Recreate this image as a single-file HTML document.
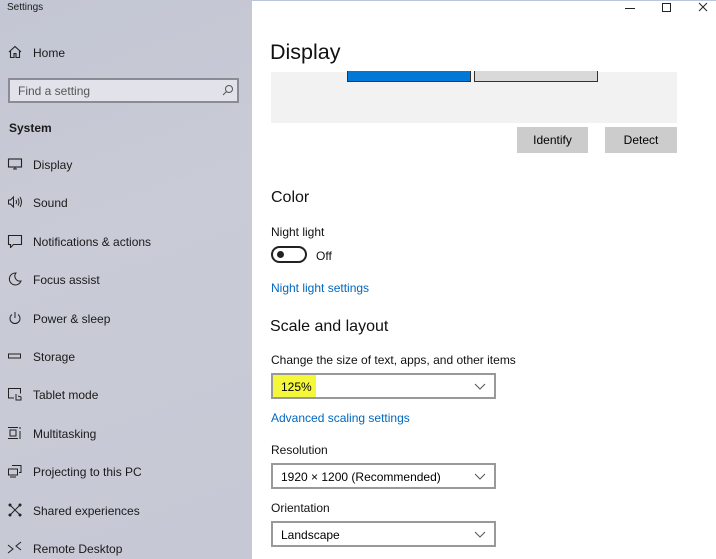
<html><head><style>
body{margin:0;width:716px;height:559px;overflow:hidden;font-family:"Liberation Sans",sans-serif;position:relative;background:#fff}
.side{position:absolute;left:0;top:0;width:252px;height:559px;background:linear-gradient(160deg,#c3c6d3 0%,#c9cbd6 40%,#c6c8d5 100%);color:#1a1a1a}
.a{position:absolute;white-space:nowrap}
.it{position:absolute;left:33px;font-size:12px;margin-top:1px}
.ic{position:absolute;left:7px;width:16px;height:14px}
.r{color:#111}
.dd{position:absolute;left:271px;width:221px;height:22px;border:2px solid #999;box-sizing:content-box;font-size:12px}
.dd span{position:absolute;left:8px;top:5px}
.dd svg{position:absolute;right:8px;top:8px}
.btn{position:absolute;top:127px;height:26px;background:#ccc;font-size:12px;text-align:center;line-height:27px}
.lk{color:#0067c0;font-size:12px}
</style></head><body>
<div class="side">
<div class="a" style="left:7px;top:2px;font-size:10px">Settings</div>
<svg class="ic" style="top:45px" viewBox="0 0 16 14"><path d="M2 7L8 1.5 14 7M3.5 6v6.5h3.5v-4h2v4h3.5V6" fill="none" stroke="#222" stroke-width="1.1"/></svg>
<div class="it" style="top:45px">Home</div>
<div class="a" style="left:8px;top:78px;width:227px;height:21px;border:2px solid #8a8c95;background:#e2e3ea"></div>
<div class="a" style="left:18px;top:84px;font-size:12px;color:#555">Find a setting</div>
<svg class="a" style="left:222px;top:84px" width="12" height="12"><circle cx="7" cy="5" r="3.5" fill="none" stroke="#555"/><path d="M4.5 7.5L1 11" stroke="#555"/></svg>
<div class="a" style="left:9px;top:121px;font-size:12px;font-weight:bold">System</div>
<svg class="ic" style="top:157px" viewBox="0 0 16 14"><rect x="1.5" y="2" width="13" height="8" fill="none" stroke="#222" stroke-width="1.1"/><path d="M6 12h4M8 10v2" stroke="#222"/></svg>
<div class="it" style="top:157px">Display</div>
<svg class="ic" style="top:195px" viewBox="0 0 16 14"><path d="M1.5 5h2l3-3v10l-3-3h-2z" fill="none" stroke="#222"/><path d="M9 5q1 2 0 4M11 3.5q2 3.5 0 7M13 2q3 5 0 10" fill="none" stroke="#222"/></svg>
<div class="it" style="top:195px">Sound</div>
<svg class="ic" style="top:234px" viewBox="0 0 16 14"><path d="M1.5 1.5h13v9h-8l-3 3v-3h-2z" fill="none" stroke="#222" stroke-width="1.1"/></svg>
<div class="it" style="top:234px">Notifications &amp; actions</div>
<svg class="ic" style="top:272px" viewBox="0 0 16 14"><path d="M9 1a6 6 0 1 0 5 8 5 5 0 0 1-5-8z" fill="none" stroke="#222"/></svg>
<div class="it" style="top:272px">Focus assist</div>
<svg class="ic" style="top:311px" viewBox="0 0 16 14"><path d="M5 3.5a5 5 0 1 0 6 0M8 1v6" fill="none" stroke="#222"/></svg>
<div class="it" style="top:311px">Power &amp; sleep</div>
<svg class="ic" style="top:349px" viewBox="0 0 16 14"><rect x="1.5" y="5" width="12" height="4" fill="none" stroke="#222"/></svg>
<div class="it" style="top:349px">Storage</div>
<svg class="ic" style="top:387px" viewBox="0 0 16 14"><path d="M7 11H1.5V1.5h12v5" fill="none" stroke="#222"/><path d="M9 7v6h5v-3l-3-1" fill="none" stroke="#222"/></svg>
<div class="it" style="top:387px">Tablet mode</div>
<svg class="ic" style="top:426px" viewBox="0 0 16 14"><path d="M1 1.5h10M1 12.5h10M3 4h6v6H3z" fill="none" stroke="#222"/><path d="M13 1v2M13 5v8" stroke="#222"/></svg>
<div class="it" style="top:426px">Multitasking</div>
<svg class="ic" style="top:464px" viewBox="0 0 16 14"><path d="M5 1.5h9v7h-2M1.5 5h9v6h-9zM3 13h6" fill="none" stroke="#222"/></svg>
<div class="it" style="top:464px">Projecting to this PC</div>
<svg class="ic" style="top:503px" viewBox="0 0 16 14"><path d="M3 2l10 10M13 2L3 12" stroke="#222"/><circle cx="3" cy="2" r="1.5" fill="#222"/><circle cx="13" cy="2" r="1.5" fill="#222"/><circle cx="3" cy="12" r="1.5" fill="#222"/><circle cx="13" cy="12" r="1.5" fill="#222"/></svg>
<div class="it" style="top:503px">Shared experiences</div>
<svg class="ic" style="top:541px" viewBox="0 0 16 14"><path d="M1 4l5 4-5 4M14 1L9 5l5 4" fill="none" stroke="#222"/></svg>
<div class="it" style="top:541px">Remote Desktop</div>
</div>
<div class="a" style="left:252px;top:0;width:464px;height:1px;background:#b9c6dc"></div>
<svg class="a" style="left:620px;top:0" width="96" height="16"><path d="M5 8.5h10" stroke="#222"/><rect x="42.5" y="3.5" width="8" height="8" fill="none" stroke="#222"/><path d="M79 3l8 8M87 3l-8 8" stroke="#222"/></svg>
<div class="a r" style="left:270px;top:40px;font-size:21.5px">Display</div>
<div class="a" style="left:271px;top:72px;width:406px;height:51px;background:#f2f2f2"></div>
<div class="a" style="left:347px;top:71px;width:122px;height:10px;background:#0078d7;border:1px solid #333;border-top:none"></div>
<div class="a" style="left:474px;top:71px;width:122px;height:10px;background:#d9d9d9;border:1px solid #333;border-top:none"></div>
<div class="btn" style="left:517px;width:71px">Identify</div>
<div class="btn" style="left:605px;width:72px">Detect</div>
<div class="a r" style="left:271px;top:189px;font-size:16px">Color</div>
<div class="a r" style="left:271px;top:225px;font-size:12px">Night light</div>
<div class="a" style="left:271px;top:246px;width:32px;height:13px;border:2px solid #222;border-radius:10px"></div>
<div class="a" style="left:277px;top:251px;width:7px;height:7px;border-radius:50%;background:#222"></div>
<div class="a r" style="left:316px;top:249px;font-size:12px">Off</div>
<div class="a lk" style="left:271px;top:281px">Night light settings</div>
<div class="a r" style="left:270px;top:318px;font-size:16px">Scale and layout</div>
<div class="a r" style="left:271px;top:353px;font-size:12px">Change the size of text, apps, and other items</div>
<div class="dd" style="top:373px"><div class="a" style="left:0;top:0;width:43px;height:22px;background:#f5f83a"></div><span>125%</span><svg width="12" height="7"><path d="M1 1l5 5 5-5" fill="none" stroke="#555"/></svg></div>
<div class="a lk" style="left:271px;top:411px">Advanced scaling settings</div>
<div class="a r" style="left:271px;top:443px;font-size:12px">Resolution</div>
<div class="dd" style="top:463px"><span>1920 × 1200 (Recommended)</span><svg width="12" height="7"><path d="M1 1l5 5 5-5" fill="none" stroke="#555"/></svg></div>
<div class="a r" style="left:271px;top:501px;font-size:12px">Orientation</div>
<div class="dd" style="top:521px"><span>Landscape</span><svg width="12" height="7"><path d="M1 1l5 5 5-5" fill="none" stroke="#555"/></svg></div>
</body></html>
